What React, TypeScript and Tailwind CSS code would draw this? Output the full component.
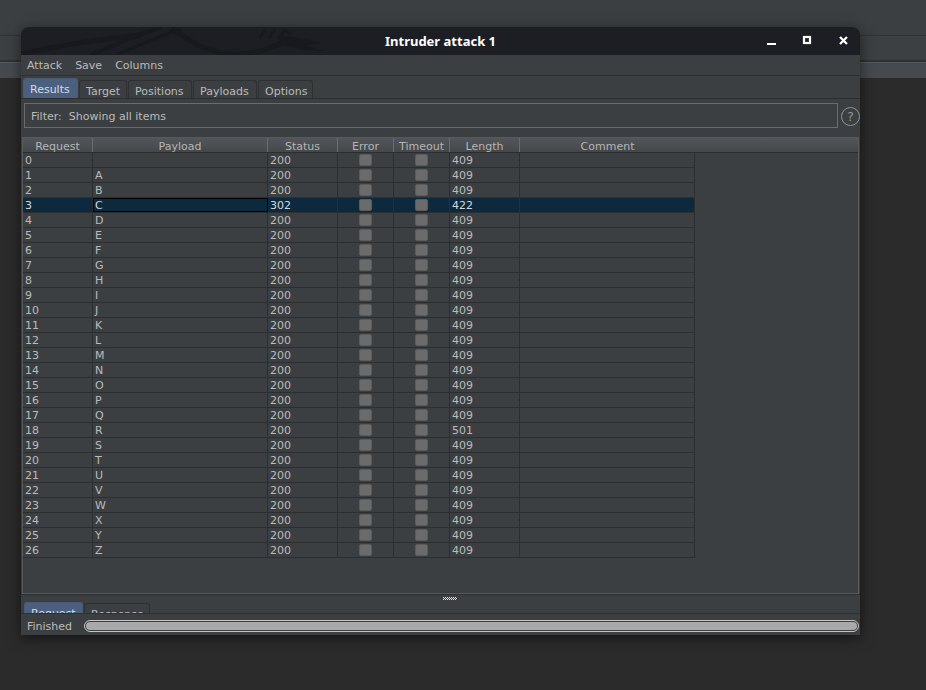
import React from "react";

const columns = [
  { label: "Request", w: "w-[70px]" },
  { label: "Payload", w: "w-[175px]" },
  { label: "Status", w: "w-[70px]" },
  { label: "Error", w: "w-[56px]" },
  { label: "Timeout", w: "w-[56px]" },
  { label: "Length", w: "w-[70px]" },
  { label: "Comment", w: "w-[175px]" },
];

const letters = "ABCDEFGHIJKLMNOPQRSTUVWXYZ".split("");

const rows = Array.from({ length: 27 }, (_, i) => ({
  id: i,
  payload: i === 0 ? "" : letters[i - 1],
  status: i === 3 ? "302" : "200",
  length: i === 3 ? "422" : i === 18 ? "501" : "409",
}));

const tabs = [
  { label: "Results", w: "w-[55px]" },
  { label: "Target", w: "w-[48px]" },
  { label: "Positions", w: "w-[64px]" },
  { label: "Payloads", w: "w-[64px]" },
  { label: "Options", w: "w-[55px]" },
];

function CheckBox() {
  return <div className="h-[12px] w-[13px] rounded-[2px] border border-[#5b5b5b] bg-[#6b6b6b]" />;
}

// faint kali dragon behind the title
function Dragon() {
  return (
    <svg className="absolute left-0 top-0" width="320" height="28" viewBox="0 0 320 28" fill="none">
      <path d="M0 27 C40 18 80 12 120 8" stroke="#17191d" strokeWidth="5" />
      <path d="M70 28 C95 18 115 8 140 0" stroke="#17191d" strokeWidth="4" />
      <path d="M95 28 C115 20 135 10 160 2" stroke="#17191d" strokeWidth="3" />
      <path d="M150 2 C165 10 180 22 200 26 C228 30 250 22 264 14" stroke="#17191d" strokeWidth="5" />
      <path d="M238 12 L244 3 M248 11 L254 2 M257 12 L263 4 L270 7" stroke="#17191d" strokeWidth="2.5" />
      <path d="M256 9 C270 8 282 12 300 16 L284 18 L302 24 C288 24 276 22 262 18 Z" fill="#17191d" />
    </svg>
  );
}

function Cell({ w, children, selected, focus }: { w: string; children?: React.ReactNode; selected?: boolean; focus?: boolean }) {
  return (
    <div
      className={`${w} h-full shrink-0 border-r border-[#2c2e30] pl-[2px] ${
        focus ? "outline outline-1 -outline-offset-1 outline-black" : ""
      } ${selected ? "text-[#d4d8dc]" : ""}`}
    >
      {children}
    </div>
  );
}

export default function App() {
  return (
    <div
      className="relative h-[690px] w-[926px] overflow-hidden bg-[#2b2b2b] text-[11px] text-[#bbbbbb]"
      style={{ fontFamily: '"DejaVu Sans", sans-serif' }}
    >
      {/* desktop app behind the window */}
      <div className="h-[35px] bg-[#3c3f41]" />
      <div className="h-[25px] border-t border-[#303234] bg-[#3d4042]" />
      <div className="h-[2px] bg-[#2f3133]" />
      <div className="h-[16px] border-t border-[#55585b] bg-[#464a50]" />

      {/* intruder window */}
      <div className="absolute left-[21px] top-[27px] flex h-[608px] w-[839px] flex-col rounded-t-[8px] bg-[#3c3f41] shadow-[0_3px_14px_rgba(0,0,0,0.55)]">
        <div className="relative h-[28px] shrink-0 overflow-hidden rounded-t-[8px] bg-[#1c1e23]">
          <Dragon />
          <div
            className="absolute inset-0 flex items-center justify-center pt-[1px] text-[13px] font-bold text-white"
            style={{ fontFamily: '"Noto Sans", sans-serif' }}
          >
            Intruder attack 1
          </div>
          <svg className="absolute left-[744px] top-[8px]" width="90" height="14" viewBox="0 0 90 14">
            <rect x="2" y="8" width="9" height="2" fill="#ffffff" />
            <rect x="39" y="2" width="6" height="6" fill="none" stroke="#ffffff" strokeWidth="2.2" />
            <path d="M75 2 L82 9 M82 2 L75 9" stroke="#ffffff" strokeWidth="2.2" />
          </svg>
        </div>

        <div className="flex h-[21px] shrink-0 items-center gap-[13px] border-b border-[#2e3032] pl-[6px] pt-[2px]">
          <span>Attack</span>
          <span>Save</span>
          <span>Columns</span>
        </div>

        <div className="mt-[2px] flex h-[21px] shrink-0 items-end gap-[1px] border-b border-[#2b2d2f] pl-[2px]">
          {tabs.map((t, i) => (
            <div
              key={t.label}
              className={`${t.w} rounded-t-[3px] border border-b-0 pl-[6px] ${
                i === 0
                  ? "h-[20px] border-[#4a5a73] bg-[#4b5f7f] leading-[21px] text-[#d6dbe2]"
                  : "h-[18px] border-[#2e3032] bg-[#3c3f41] leading-[21px]"
              }`}
            >
              {t.label}
            </div>
          ))}
        </div>

        <div className="mt-[4px] flex shrink-0 items-center">
          <div className="ml-[3px] flex h-[25px] w-[815px] items-center border border-[#696c6e] pl-[6px] pt-[3px]">
            Filter:&nbsp; Showing all items
          </div>
          <div className="ml-[3px] mt-[1px] flex h-[19px] w-[19px] items-center justify-center rounded-full border border-[#8f9294] pt-[1px] text-[13px] text-[#8f9294]">
            ?
          </div>
        </div>

        <div className="ml-[1px] mt-[9px] flex h-[457px] w-[837px] shrink-0 flex-col border border-[#57595b]">
          <div className="flex h-[15px] shrink-0 border-b border-[#2b2d2f] bg-gradient-to-b from-[#52565a] to-[#45484b] pt-[1px] leading-[16px] text-[#b5b5b5]">
            {columns.map((c, i) => (
              <div
                key={c.label}
                className={`${c.w} -mt-[1px] shrink-0 pt-[1px] text-center ${
                  i < columns.length - 1 ? "border-r border-[#6a6d70]" : ""
                }`}
              >
                {c.label}
              </div>
            ))}
            <div className="flex-1" />
          </div>
          {rows.map((r) => {
            const sel = r.id === 3;
            return (
              <div
                key={r.id}
                className={`flex h-[15px] w-[672px] shrink-0 border-b border-[#2c2e30] leading-[16px] ${
                  sel ? "bg-[#0d293e]" : "bg-[#3c3f41]"
                }`}
              >
                <Cell w="w-[70px]" selected={sel}>{r.id}</Cell>
                <Cell w="w-[175px]" selected={sel} focus={sel}>
                  {r.payload}
                </Cell>
                <Cell w="w-[70px]" selected={sel}>{r.status}</Cell>
                <div className="flex h-full w-[56px] shrink-0 items-center justify-center border-r border-[#2c2e30]">
                  <CheckBox />
                </div>
                <div className="flex h-full w-[56px] shrink-0 items-center justify-center border-r border-[#2c2e30]">
                  <CheckBox />
                </div>
                <Cell w="w-[70px]" selected={sel}>{r.length}</Cell>
                <Cell w="w-[175px]" />
              </div>
            );
          })}
        </div>

        <div className="flex h-[7px] shrink-0 items-center justify-center border-t border-[#2e3032] pl-[18px]">
          <svg width="14" height="3" viewBox="0 0 14 3">
            <defs>
              <pattern id="grip" width="2" height="2" patternUnits="userSpaceOnUse">
                <rect x="0" y="0" width="1" height="1" fill="#e0e0e0" />
                <rect x="1" y="1" width="1" height="1" fill="#e0e0e0" />
              </pattern>
            </defs>
            <rect width="14" height="3" fill="url(#grip)" />
          </svg>
        </div>

        <div className="flex h-[12px] shrink-0 items-start gap-[1px] overflow-hidden pl-[3px] pt-[1px]">
          <div className="h-[20px] w-[59px] rounded-t-[3px] border border-b-0 border-[#4a5a73] bg-[#4b5f7f] pl-[6px] pt-[3px] text-[#d6dbe2]">
            Request
          </div>
          <div className="mt-[1px] h-[20px] w-[66px] rounded-t-[3px] border border-b-0 border-[#2e3032] pl-[6px] pt-[3px]">
            Response
          </div>
        </div>

        <div className="flex flex-1 items-start border-t border-[#2e3032] pl-[6px] pt-[6px]">
          <span className="w-[57px] leading-[14px]">Finished</span>
          <div className="h-[12px] w-[775px] rounded-full border border-[#c4c4c4] bg-[#3c3f41] p-[1px]">
            <div className="h-full w-full rounded-full bg-[#a9a9a9]" />
          </div>
        </div>
      </div>
    </div>
  );
}
